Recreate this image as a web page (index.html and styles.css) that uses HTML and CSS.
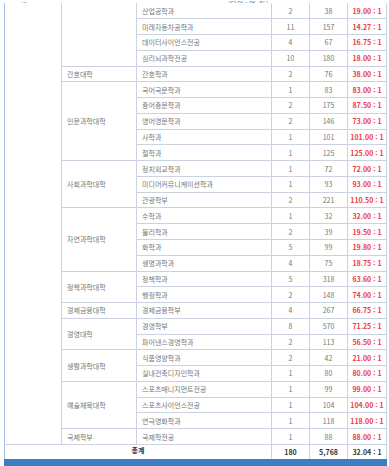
FILE: index.html
```html
<!DOCTYPE html>
<html lang="ko">
<head>
<meta charset="utf-8">
<link rel="stylesheet" href="styles.css">
</head>
<body>
<div class="page">
  <div class="note"><span class="note-a">※</span><span class="note-b">(단위 : 명, %)</span></div>
  <table class="rate">
    <colgroup>
      <col class="c1"><col class="c2"><col class="c3"><col class="c4"><col class="c5"><col class="c6">
    </colgroup>
    <tbody>
      <tr><td class="camp" rowspan="28"></td><td rowspan="4"></td><td>산업공학과</td><td class="n">2</td><td class="n">38</td><td class="r">19.00 : 1</td></tr>
      <tr><td>미래자동차공학과</td><td class="n">11</td><td class="n">157</td><td class="r">14.27 : 1</td></tr>
      <tr><td>데이터사이언스전공</td><td class="n">4</td><td class="n">67</td><td class="r">16.75 : 1</td></tr>
      <tr><td>심리뇌과학전공</td><td class="n">10</td><td class="n">180</td><td class="r">18.00 : 1</td></tr>
      <tr><td>간호대학</td><td>간호학과</td><td class="n">2</td><td class="n">76</td><td class="r">38.00 : 1</td></tr>
      <tr><td rowspan="5">인문과학대학</td><td>국어국문학과</td><td class="n">1</td><td class="n">83</td><td class="r">83.00 : 1</td></tr>
      <tr><td>중어중문학과</td><td class="n">2</td><td class="n">175</td><td class="r">87.50 : 1</td></tr>
      <tr><td>영어영문학과</td><td class="n">2</td><td class="n">146</td><td class="r">73.00 : 1</td></tr>
      <tr><td>사학과</td><td class="n">1</td><td class="n">101</td><td class="r">101.00 : 1</td></tr>
      <tr><td>철학과</td><td class="n">1</td><td class="n">125</td><td class="r">125.00 : 1</td></tr>
      <tr><td rowspan="3">사회과학대학</td><td>정치외교학과</td><td class="n">1</td><td class="n">72</td><td class="r">72.00 : 1</td></tr>
      <tr><td>미디어커뮤니케이션학과</td><td class="n">1</td><td class="n">93</td><td class="r">93.00 : 1</td></tr>
      <tr><td>관광학부</td><td class="n">2</td><td class="n">221</td><td class="r">110.50 : 1</td></tr>
      <tr><td rowspan="4">자연과학대학</td><td>수학과</td><td class="n">1</td><td class="n">32</td><td class="r">32.00 : 1</td></tr>
      <tr><td>물리학과</td><td class="n">2</td><td class="n">39</td><td class="r">19.50 : 1</td></tr>
      <tr><td>화학과</td><td class="n">5</td><td class="n">99</td><td class="r">19.80 : 1</td></tr>
      <tr><td>생명과학과</td><td class="n">4</td><td class="n">75</td><td class="r">18.75 : 1</td></tr>
      <tr><td rowspan="2">정책과학대학</td><td>정책학과</td><td class="n">5</td><td class="n">318</td><td class="r">63.60 : 1</td></tr>
      <tr><td>행정학과</td><td class="n">2</td><td class="n">148</td><td class="r">74.00 : 1</td></tr>
      <tr><td>경제금융대학</td><td>경제금융학부</td><td class="n">4</td><td class="n">267</td><td class="r">66.75 : 1</td></tr>
      <tr><td rowspan="2">경영대학</td><td>경영학부</td><td class="n">8</td><td class="n">570</td><td class="r">71.25 : 1</td></tr>
      <tr><td>파이낸스경영학과</td><td class="n">2</td><td class="n">113</td><td class="r">56.50 : 1</td></tr>
      <tr><td rowspan="2">생활과학대학</td><td>식품영양학과</td><td class="n">2</td><td class="n">42</td><td class="r">21.00 : 1</td></tr>
      <tr><td>실내건축디자인학과</td><td class="n">1</td><td class="n">80</td><td class="r">80.00 : 1</td></tr>
      <tr><td rowspan="3">예술체육대학</td><td>스포츠매니지먼트전공</td><td class="n">1</td><td class="n">99</td><td class="r">99.00 : 1</td></tr>
      <tr><td>스포츠사이언스전공</td><td class="n">1</td><td class="n">104</td><td class="r">104.00 : 1</td></tr>
      <tr><td>연극영화학과</td><td class="n">1</td><td class="n">118</td><td class="r">118.00 : 1</td></tr>
      <tr><td>국제학부</td><td>국제학전공</td><td class="n">1</td><td class="n">88</td><td class="r">88.00 : 1</td></tr>
    </tbody>
    <tfoot>
      <tr class="total"><td colspan="3" class="t-label">총계</td><td class="n">180</td><td class="n">5,768</td><td class="n">32.04 : 1</td></tr>
    </tfoot>
  </table>
</div>
</body>
</html>
```
FILE: styles.css
```css
html, body {
  margin: 0;
  padding: 0;
  background: #ffffff;
}
.page {
  padding: 0 4px 0 4px;
  font-family: "Noto Sans CJK KR", "Noto Sans", sans-serif;
  font-size: 7px;
  color: #777777;
}
.note {
  height: 3px;
  overflow: hidden;
  display: flex;
  align-items: flex-end;
  font-size: 7px;
  line-height: 8px;
  color: #666;
}
.note span {
  display: block;
  height: 8px;
  margin-bottom: -5px;
}
.note-a { margin-left: 17px; }
.note-b { margin-left: 200px; }
.rate {
  width: 382px;
  border-collapse: collapse;
  table-layout: fixed;
  border-bottom: 8px solid #3f7cc6;
}
.c1 { width: 57px; }
.c2 { width: 75px; }
.c3 { width: 135px; }
.c4 { width: 38px; }
.c5 { width: 38px; }
.c6 { width: 39px; }
.rate td {
  box-sizing: border-box;
  border: 1px solid #cbd3e1;
  height: 15.78px;
  padding: 0 0 0 5px;
  line-height: 10px;
  white-space: nowrap;
  overflow: hidden;
  vertical-align: middle;
}
.rate tbody tr:first-child td {
  border-top: none;
}
.rate td:first-child,
.rate td.camp {
  border-left: 1px solid #a9c0e6;
}
.rate td.n {
  text-align: center;
  padding: 0;
}
.rate td.r {
  text-align: center;
  padding: 0;
  color: #ee3a43;
  font-weight: 700;
}
.total td {
  height: 19px;
  padding-bottom: 4px;
  color: #333333;
  font-weight: 700;
}
.total td.t-label {
  text-align: center;
  padding: 0 0 4px 0;
  border-left: 1px solid #a9c0e6;
}
```
